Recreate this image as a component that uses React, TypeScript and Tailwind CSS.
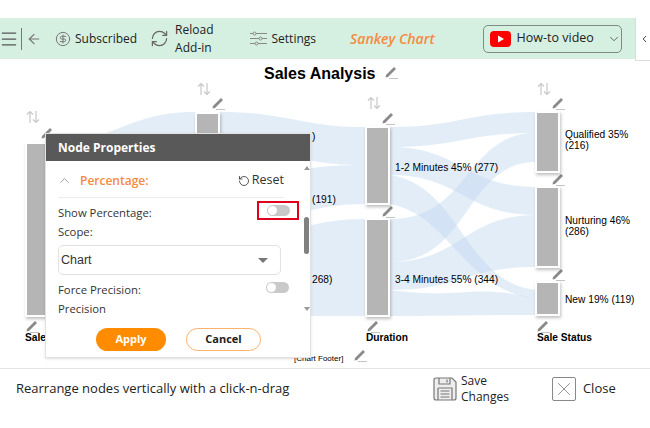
import React from 'react';
import { ArrowLeft, ChevronDown, ChevronLeft, ChevronUp, CircleDollarSign, Menu, RefreshCw, RotateCcw, X } from 'lucide-react';

const flows = [
  // first column to second column
  'M47 142 C120 142 125 112 196 112 L196 160 C125 160 120 205 47 205 Z',
  'M47 205 C120 205 125 175 196 175 L196 225 C125 225 120 260 47 260 Z',
  'M47 260 C120 260 125 240 196 240 L196 316 C125 316 120 316 47 316 Z',
  // second column to third column
  'M220 112 C290 112 300 127 366 127 L366 165 C300 165 290 150 220 150 Z',
  'M220 175 C290 175 300 165 366 165 L366 204 C300 204 290 225 220 225 Z',
  'M220 240 C290 240 300 219 366 219 L366 316 C300 316 290 316 220 316 Z',
  // third column to status column
  'M390 127 C460 127 465 112 536 112 L536 133 C465 133 460 147 390 147 Z',
  'M390 147 C460 147 465 187 536 187 L536 215 C465 215 460 175 390 175 Z',
  'M390 175 C460 185 465 283 536 290 L536 298 C465 292 450 215 390 204 Z',
  'M390 219 C470 219 465 133 536 133 L536 162 C465 162 470 262 390 262 Z',
  'M390 262 C460 262 465 215 536 215 L536 267 C465 267 460 290 390 290 Z',
  'M390 290 C470 300 465 283 536 298 L536 315 C465 315 460 316 390 316 Z',
];

const Pencil = ({ className }: { className: string }) => (
  <svg viewBox="0 0 14 14" className={`absolute h-[14px] w-[14px] ${className}`}>
    <path d="M2 10 L10 2 L12 4 L4 12 L1.500 12.500 Z" fill="#8a8a8a" />
    <path d="M5 13.500 H14" stroke="#c4c4c4" strokeWidth="1" />
  </svg>
);

const SortArrows = ({ className }: { className: string }) => (
  <svg viewBox="0 0 14 14" fill="none" stroke="#c8c8c8" strokeWidth="1.200" className={`absolute h-[14px] w-[14px] ${className}`}>
    <path d="M4 13 V1.500 M1 4.500 L4 1.500 L7 4.500" />
    <path d="M10 1 V12.500 M7 9.500 L10 12.500 L13 9.500" />
  </svg>
);

const Node = ({ className }: { className: string }) => (
  <div className={`absolute w-[25px] border-2 border-white bg-[#b5b5b5] shadow-[1px_2px_3px_rgba(0,0,0,0.25)] ${className}`} />
);

const Label = ({ className, children }: { className: string; children: React.ReactNode }) => (
  <div className={`absolute text-[10.200px] leading-[11px] text-black ${className}`}>{children}</div>
);

const Toggle = () => (
  <div className="flex h-[11px] w-[23px] items-center rounded-full bg-[#c9c9c9] pl-px">
    <div className="h-[9px] w-[9px] rounded-full bg-white" />
  </div>
);

const App = () => {
  return (
    <div className="flex h-[428px] w-[650px] flex-col overflow-hidden bg-white font-['Open_Sans',sans-serif] text-black">
      <div className="h-[18px]" />

      <div className="flex h-[41px] items-center">
        <div className="flex h-full w-[635px] items-center bg-[#d5efe0] text-[#222]">
          <Menu className="ml-[-1px] h-[20px] w-[20px] text-[#555]" strokeWidth={1.500} />
          <div className="ml-[2px] h-[22px] w-px bg-[#777]" />
          <ArrowLeft className="ml-[4px] h-[16px] w-[16px] text-[#777]" strokeWidth={1.800} />
          <CircleDollarSign className="ml-[13px] h-[16px] w-[16px] text-[#777]" strokeWidth={1.500} />
          <span className="ml-[4px] text-[12px]">Subscribed</span>
          <RefreshCw className="ml-[13px] h-[19px] w-[19px] text-[#666]" strokeWidth={1.500} />
          <span className="ml-[6px] text-[12px] leading-[17.500px]">Reload<br />Add-in</span>
          <svg viewBox="0 0 17 15" fill="none" stroke="#888" strokeWidth="1" className="ml-[36px] h-[15px] w-[17px]">
            <path d="M0 2.500 H3 M6 2.500 H17 M0 7.500 H9 M12 7.500 H17 M0 12.500 H5 M8 12.500 H17" />
            <circle cx="4.500" cy="2.500" r="1.500" />
            <circle cx="10.500" cy="7.500" r="1.500" />
            <circle cx="6.500" cy="12.500" r="1.500" />
          </svg>
          <span className="ml-[5px] text-[12px]">Settings</span>
          <span className="ml-[34px] text-[14px] font-semibold italic text-[#f58a42]">Sankey Chart</span>
          <div className="ml-[48px] flex h-[28px] w-[139px] items-center rounded-[5px] border border-[#7f8c85] pl-[6px]">
            <svg viewBox="0 0 21 16" className="h-[16px] w-[21px] shrink-0">
              <rect width="21" height="16" rx="4" fill="#ff0000" />
              <path d="M8 4.500 L14 8 L8 11.500 Z" fill="#ffffff" />
            </svg>
            <span className="ml-[6px] whitespace-nowrap text-[12.500px]">How-to video</span>
            <ChevronDown className="ml-[13px] h-[14px] w-[14px] shrink-0 text-[#555]" strokeWidth={1.500} />
          </div>
        </div>
        <div className="flex h-[43px] w-[15px] self-start items-center border-b border-l border-[#dcdcdc] pl-[3px]">
          <ChevronLeft className="h-[12px] w-[12px] text-[#333]" strokeWidth={2} />
        </div>
      </div>

      <div className="relative h-[310px] border-b border-[#e4e4e4] font-['Liberation_Sans',sans-serif]">
        <svg viewBox="0 59 650 309" className="absolute inset-0 h-[309px] w-[650px]">
          {flows.map((d, i) => (
            <path key={i} d={d} fill="#bdd3ef" fillOpacity={0.42} />
          ))}
        </svg>

        <div className="absolute left-[264px] top-[5px] text-[16px] font-bold leading-[20px]">Sales Analysis</div>
        <Pencil className="left-[384px] top-[6px]" />

        <SortArrows className="left-[26px] top-[51px]" />
        <SortArrows className="left-[197px] top-[23px]" />
        <SortArrows className="left-[367px] top-[37px]" />
        <SortArrows className="left-[537px] top-[23px]" />

        <Pencil className="left-[40px] top-[67px]" />
        <Pencil className="left-[211px] top-[37px]" />
        <Pencil className="left-[381px] top-[52px]" />
        <Pencil className="left-[381px] top-[145px]" />
        <Pencil className="left-[551px] top-[37px]" />
        <Pencil className="left-[551px] top-[113px]" />
        <Pencil className="left-[551px] top-[208px]" />
        <Pencil className="left-[25px] top-[260px]" />
        <Pencil className="left-[366px] top-[260px]" />
        <Pencil className="left-[536px] top-[260px]" />
        <Pencil className="left-[353px] top-[289px]" />

        <Node className="left-[25px] top-[83px] h-[175px]" />
        <Node className="left-[195px] top-[53px] h-[50px]" />
        <Node className="left-[365px] top-[67px] h-[79px]" />
        <Node className="left-[365px] top-[159px] h-[99px]" />
        <Node className="left-[535px] top-[52px] h-[62px]" />
        <Node className="left-[535px] top-[127px] h-[82px]" />
        <Node className="left-[535px] top-[222px] h-[35px]" />

        <Label className="left-[312px] top-[72px]">)</Label>
        <Label className="left-[312px] top-[135px]">(191)</Label>
        <Label className="left-[312px] top-[215px]">268)</Label>
        <Label className="left-[395px] top-[103px]">1-2 Minutes 45% (277)</Label>
        <Label className="left-[395px] top-[215px]">3-4 Minutes 55% (344)</Label>
        <Label className="left-[565px] top-[70px]">Qualified 35%<br />(216)</Label>
        <Label className="left-[565px] top-[156px]">Nurturing 46%<br />(286)</Label>
        <Label className="left-[565px] top-[235px]">New 19% (119)</Label>
        <Label className="left-[25px] top-[273px] font-bold">Sale</Label>
        <Label className="left-[366px] top-[273px] font-bold">Duration</Label>
        <Label className="left-[537px] top-[273px] font-bold">Sale Status</Label>
        <div className="absolute left-[294px] top-[295px] text-[8px] leading-[10px]">[Chart Footer]</div>

        <div className="absolute left-[45px] top-[74px] flex h-[225px] w-[266px] flex-col border border-[#e2e2e2] bg-white font-['Open_Sans',sans-serif] shadow-sm">
          <div className="flex h-[27px] shrink-0 items-center bg-[#595959] pl-[12px] pt-[1px] text-[12px] font-bold text-white">Node Properties</div>
          <div className="flex min-h-0 flex-1">
            <div className="w-[258px] pl-[12px] pr-[20px] text-[11.300px] text-[#333]">
              <div className="flex h-[37px] items-center border-b border-[#ececec] pt-[3px]">
                <ChevronUp className="ml-[-1px] h-[15px] w-[15px] text-[#999]" strokeWidth={1.500} />
                <span className="ml-[8px] text-[12px] font-semibold text-[#f58a42]">Percentage:</span>
                <RotateCcw className="ml-auto h-[12px] w-[12px] text-[#222]" strokeWidth={1.500} />
                <span className="ml-[2px] text-[12.500px]">Reset</span>
              </div>
              <div className="mt-[5px] flex h-[20px] items-center justify-between">
                <span>Show Percentage:</span>
                <div className="flex h-[19px] w-[42px] -translate-y-[3px] translate-x-[15px] items-center justify-center border-2 border-[#e0001b]">
                  <Toggle />
                </div>
              </div>
              <div className="h-[17px] leading-[17px]">Scope:</div>
              <div className="mt-[5px] flex h-[30px] w-[223px] items-center justify-between rounded-[5px] border border-[#e2e2e2] pl-[2px] pr-[12px] font-['Liberation_Sans',sans-serif] text-[12.500px]">
                <span>Chart</span>
                <div className="h-0 w-0 border-x-[5px] border-t-[5px] border-x-transparent border-t-[#777]" />
              </div>
              <div className="mt-[5px] flex h-[20px] items-center justify-between">
                <span>Force Precision:</span>
                <div className="translate-x-[5px] -translate-y-[3px]"><Toggle /></div>
              </div>
              <div className="h-[18px] leading-[18px]">Precision</div>
            </div>
            <div className="relative w-[6px]">
              <div className="absolute left-0 top-[5px] h-0 w-0 border-x-[3px] border-b-[4px] border-x-transparent border-b-[#999]" />
              <div className="absolute left-0 top-[56px] h-[37px] w-[5px] rounded-full bg-[#808080]" />
              <div className="absolute left-0 top-[146px] h-0 w-0 border-x-[3px] border-t-[4px] border-x-transparent border-t-[#999]" />
            </div>
          </div>
          <div className="flex h-[29px] shrink-0 items-start pl-[50px]">
            <div className="flex h-[23px] w-[70px] items-center justify-center rounded-full bg-[#ff8c00] text-[11px] font-bold text-white">Apply</div>
            <div className="ml-[20px] flex h-[23px] w-[75px] items-center justify-center rounded-full border border-[#fbb26a] text-[11px] font-bold text-[#222]">Cancel</div>
          </div>
        </div>
      </div>

      <div className="flex h-[40px] items-center text-[13px] text-[#222]">
        <span className="ml-[16px] w-[417px]">Rearrange nodes vertically with a click-n-drag</span>
        <svg viewBox="0 0 24 24" fill="none" stroke="#777" strokeWidth="1.200" className="h-[24px] w-[24px]">
          <path d="M1 3 Q1 1 3 1 H19 L23 5 V21 Q23 23 21 23 H3 Q1 23 1 21 Z" fill="#eeeeee" />
          <path d="M6 1 V7 H17 V1 M14 2.500 V5.500" />
          <path d="M5 11 H19 V23 M5 11 V23 M7.500 14 H16.500 M7.500 17 H16.500 M7.500 20 H16.500" />
        </svg>
        <span className="ml-[4px] text-[12px] leading-[16.500px]">Save<br />Changes</span>
        <div className="ml-[43px] flex h-[24px] w-[24px] items-center justify-center rounded-[2px] border border-[#888]">
          <X className="h-[22px] w-[22px] text-[#888]" strokeWidth={1} />
        </div>
        <span className="ml-[7px]">Close</span>
      </div>

      <div className="flex-1" />
    </div>
  );
};

export default App;
